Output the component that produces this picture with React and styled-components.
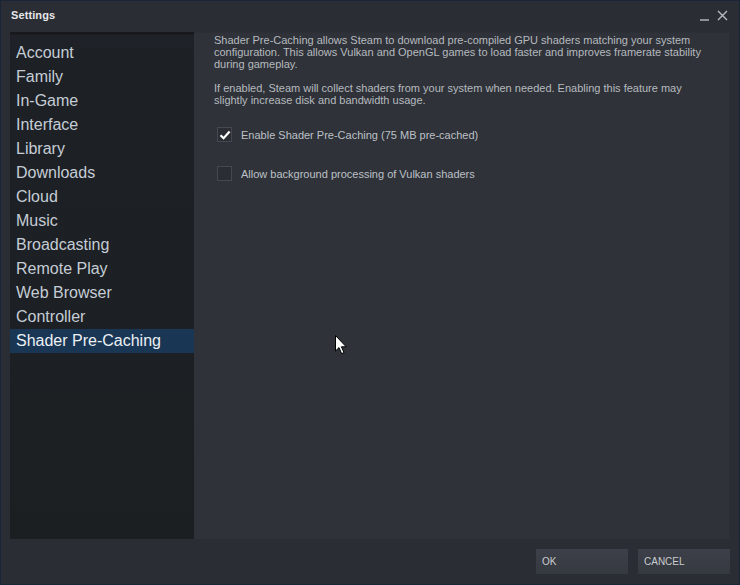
import React, { useState } from "react";
import styled, { createGlobalStyle } from "styled-components";

const GlobalStyle = createGlobalStyle`
	html, body {
		margin: 0;
		padding: 0;
		background: #1b2333;
	}
	* {
		box-sizing: border-box;
	}
`;

const sections = [
	"Account",
	"Family",
	"In-Game",
	"Interface",
	"Library",
	"Downloads",
	"Cloud",
	"Music",
	"Broadcasting",
	"Remote Play",
	"Web Browser",
	"Controller",
	"Shader Pre-Caching",
];

const Check = ({ checked, onClick, children }) => (
	<CheckRow onClick={onClick}>
		<Box>
			{checked && (
				<svg width="12" height="12" viewBox="0 0 12 12">
					<path d="M1.5 6.2 L4.6 9.2 L10.6 2.6" fill="none" stroke="#ffffff" strokeWidth="2.2" />
				</svg>
			)}
		</Box>
		<CheckLabel>{children}</CheckLabel>
	</CheckRow>
);

const App = () => {
	const [active, setActive] = useState("Shader Pre-Caching");
	const [precache, setPrecache] = useState(true);
	const [vulkan, setVulkan] = useState(false);

	return (
		<>
			<GlobalStyle />
			<Window>
				<TitleBar>
					<Title>Settings</Title>
					<WindowControls>
						<svg width="11" height="11" viewBox="0 0 11 11">
							<path d="M1 10 H10" stroke="#b9bcc0" strokeWidth="1.4" />
						</svg>
						<svg width="11" height="11" viewBox="0 0 11 11">
							<path d="M1 1 L10 10 M10 1 L1 10" stroke="#b9bcc0" strokeWidth="1.4" />
						</svg>
					</WindowControls>
				</TitleBar>
				<Body>
					<Sidebar>
						{sections.map((s) => (
							<NavItem key={s} selected={s === active} onClick={() => setActive(s)}>
								{s}
							</NavItem>
						))}
					</Sidebar>
					<Panel>
						<Paragraph>
							Shader Pre-Caching allows Steam to download pre-compiled GPU shaders matching your system
							configuration. This allows Vulkan and OpenGL games to load faster and improves framerate stability
							during gameplay.
						</Paragraph>
						<Paragraph>
							If enabled, Steam will collect shaders from your system when needed. Enabling this feature may
							slightly increase disk and bandwidth usage.
						</Paragraph>
						<Options>
							<Check checked={precache} onClick={() => setPrecache(!precache)}>
								Enable Shader Pre-Caching (75 MB pre-cached)
							</Check>
							<Check checked={vulkan} onClick={() => setVulkan(!vulkan)}>
								Allow background processing of Vulkan shaders
							</Check>
						</Options>
						<Cursor width="13" height="20" viewBox="0 0 13 20">
							<path d="M0.5 0.5 L0.5 16 L4 12.6 L6.6 18.6 L9 17.6 L6.4 11.8 L11.2 11.8 Z" fill="#ffffff" stroke="#000000" strokeWidth="1" />
						</Cursor>
					</Panel>
				</Body>
				<Footer>
					<Button>OK</Button>
					<Button>CANCEL</Button>
				</Footer>
			</Window>
		</>
	);
};

const Window = styled.div`
	width: 740px;
	height: 585px;
	background: #2a2d33;
	border: 1px solid #1b2538;
	display: flex;
	flex-direction: column;
	font-family: "Liberation Sans", Arial, sans-serif;
	overflow: hidden;
`;

const TitleBar = styled.div`
	height: 31px;
	flex: none;
	display: flex;
	align-items: center;
	justify-content: space-between;
	padding: 0 10px 4px 10px;
`;

const Title = styled.div`
	color: #e6e7e9;
	font-size: 11px;
	font-weight: bold;
	letter-spacing: 0.1px;
`;

const WindowControls = styled.div`
	display: flex;
	gap: 7px;
	align-items: center;
	margin-top: 1px;
	padding-right: 1px;
`;

const Body = styled.div`
	height: 507px;
	flex: none;
	display: flex;
	margin: 0 9px 0 9px;
`;

const Sidebar = styled.div`
	width: 184px;
	flex: none;
	background: linear-gradient(to bottom, #16181c 0px, #16181c 2px, #1f2228 3px, #1d2025 24px, #1c1f22 100%);
	padding-top: 9px;
	display: flex;
	flex-direction: column;
`;

const NavItem = styled.div`
	height: 24px;
	line-height: 24px;
	padding-left: 6px;
	font-size: 16px;
	color: ${({ selected }) => (selected ? "#ebf0f5" : "#c5cdd6")};
	background: ${({ selected }) => (selected ? "#193654" : "transparent")};
	cursor: pointer;
	white-space: nowrap;
`;

const Panel = styled.div`
	position: relative;
	flex: 1;
	background: #2f3239;
	padding: 0 0 0 20px;
	margin-right: 1px;
	border-top: 1px solid #2c2f35;
`;

const Paragraph = styled.p`
	margin: 1px 0 12px;
	font-size: 11px;
	line-height: 12px;
	color: #b6babf;
	width: 500px;
`;

const Options = styled.div`
	display: flex;
	flex-direction: column;
	gap: 24px;
	padding-top: 9px;
	padding-left: 3px;
`;

const CheckRow = styled.div`
	display: flex;
	align-items: center;
	gap: 9px;
	cursor: pointer;
`;

const Box = styled.div`
	width: 15px;
	height: 15px;
	background: #2a2d33;
	border: 1px solid #44484f;
	display: flex;
	align-items: center;
	justify-content: center;
`;

const CheckLabel = styled.span`
	font-size: 11px;
	color: #bdc1c6;
`;

const Cursor = styled.svg`
	position: absolute;
	left: 141px;
	top: 302px;
`;

const Footer = styled.div`
	flex: 1;
	display: flex;
	justify-content: flex-end;
	align-items: flex-start;
	gap: 10px;
	padding: 10px 9px 0 0;
`;

const Button = styled.button`
	width: 92px;
	height: 25px;
	border: none;
	background: linear-gradient(to bottom, #3d4048, #353940);
	color: #c9ccd0;
	font-family: "Liberation Sans", Arial, sans-serif;
	font-size: 10px;
	text-align: left;
	padding: 0 6px;
	cursor: pointer;
`;

export default App;
